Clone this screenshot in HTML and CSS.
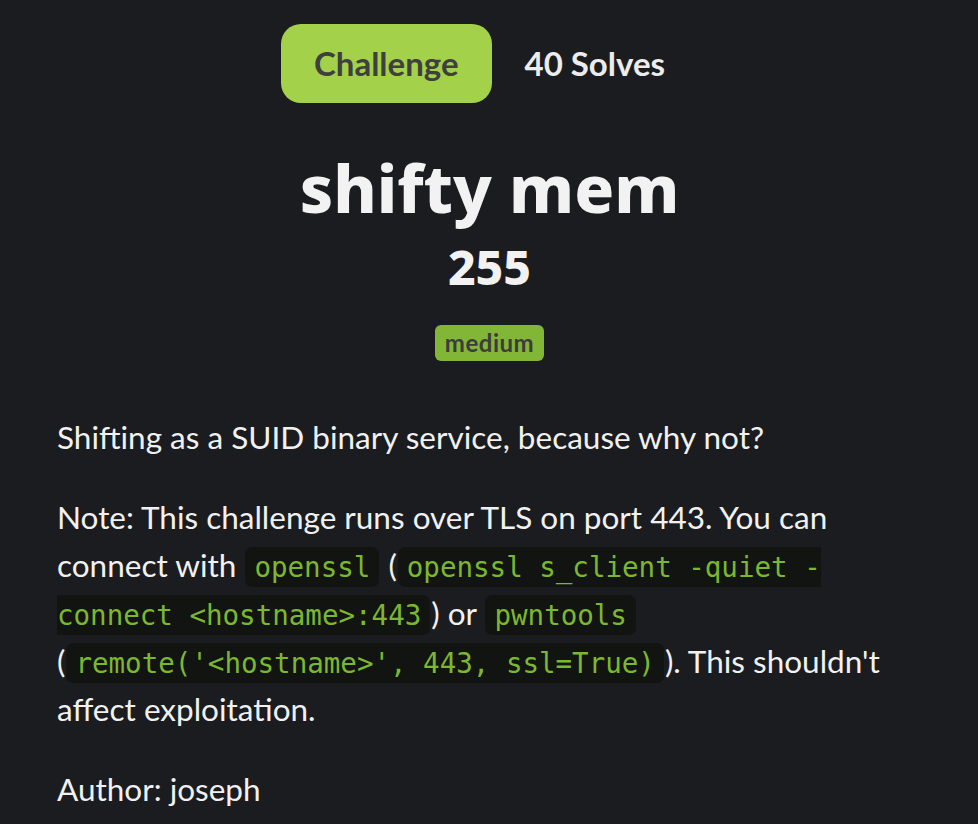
FILE: index.html
```html
<!DOCTYPE html>
<html>
<head>
<meta charset="utf-8">
<link rel="stylesheet" href="styles.css">
</head>
<body>
<div class="page">
  <div class="tabs">
    <div class="tab active">Challenge</div>
    <div class="tab">40 Solves</div>
  </div>
  <h1 class="title">shifty mem</h1>
  <div class="points">255</div>
  <div class="tags"><span class="badge">medium</span></div>
  <div class="desc">
    <p>Shifting as a SUID binary service, because why not?</p>
    <p>Note: This challenge runs over TLS on port 443. You can connect with <code>openssl</code> (<code>openssl s_client -quiet -<wbr>connect &lt;hostname&gt;:443</code>) or <code>pwntools</code> (<code>remote('&lt;hostname&gt;', 443, ssl=True)</code>). This shouldn't affect exploitation.</p>
    <p>Author: joseph</p>
  </div>
</div>
</body>
</html>
```
FILE: styles.css
```css
html, body {
  margin: 0;
  padding: 0;
  background: #1b1c1f;
}
body {
  color: #f1f1f1;
  font-family: "Lato", "Noto Sans", sans-serif;
}
.page {
  padding: 24px 56px 0 57px;
}
.tabs {
  display: flex;
  justify-content: center;
  align-items: center;
}
.tab {
  font-family: "Lato", sans-serif;
  font-weight: 700;
  font-size: 33px;
  height: 79px;
  line-height: 79px;
  padding: 0 33px;
  border-radius: 20px;
  color: #ececec;
}
.tab.active {
  background: #a3d149;
  color: #3f3f40;
}
.title {
  margin: 44px 0 0;
  text-align: center;
  font-family: "Noto Sans", sans-serif;
  font-weight: 800;
  font-size: 66px;
  line-height: 80px;
  color: #f2f2f2;
}
.points {
  text-align: center;
  font-family: "Noto Sans", sans-serif;
  font-weight: 800;
  font-size: 48px;
  line-height: 60px;
  margin-top: 10px;
  color: #f2f2f2;
}
.tags {
  display: flex;
  justify-content: center;
  margin-top: 28px;
}
.badge {
  background: #82b636;
  color: #3c3c3c;
  font-family: "Lato", sans-serif;
  font-weight: 700;
  font-size: 24px;
  letter-spacing: 0.5px;
  height: 36px;
  line-height: 36px;
  padding: 0 10px;
  border-radius: 6px;
}
.desc {
  margin-top: 52px;
  font-size: 31.5px;
  line-height: 48px;
}
.desc p {
  margin: 0 0 32px;
}
code {
  font-family: "DejaVu Sans Mono", monospace;
  font-size: 27.5px;
  line-height: 1;
  color: #7cb82f;
  background: #121412;
  border-radius: 7px;
  padding: 4px 9px;
  margin: 0 1px;
}
```
